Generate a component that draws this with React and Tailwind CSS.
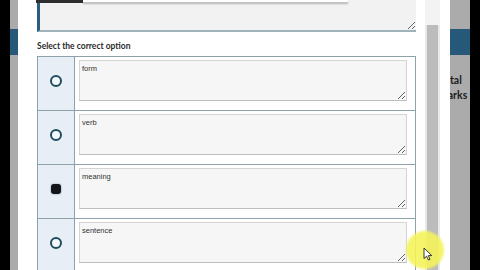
import React from 'react'

const options = [
  { text: 'form', checked: false },
  { text: 'verb', checked: false },
  { text: 'meaning', checked: true },
  { text: 'sentence', checked: false },
]

function Radio({ checked }) {
  if (checked) {
    return <div className="mt-[19px] h-[10px] w-[10px] rounded-[3px] bg-[#111418] shadow-[0_0_2px_rgba(0,0,0,0.4)]" />
  }
  return <div className="mt-[18px] h-[12px] w-[12px] rounded-full border-2 border-[#1f4d5e] bg-[#f3f8fb]" />
}

function OptionRow({ text, checked, last }) {
  return (
    <div className={`flex h-[54px] ${last ? '' : 'border-b border-[#8ea2ab]'}`}>
      <div className="flex w-[37px] shrink-0 justify-center border-r border-[#8ea2ab] bg-[#e8eef6]">
        <Radio checked={checked} />
      </div>
      <div className="flex-1 pl-[4px] pr-[8px] pt-[3px]">
        <textarea
          readOnly
          defaultValue={text}
          className="block h-[41px] w-full resize-y border border-[#d4d4d4] border-b-[#bdbdbd] bg-[#f6f6f6] px-[2px] py-[3px] font-['Liberation_Sans',sans-serif] text-[7.5px] leading-[10px] text-[#333333] outline-none"
        />
      </div>
    </div>
  )
}

export default function App() {
  return (
    <div className="relative flex h-[270px] w-[480px] overflow-hidden bg-black font-['Lato',sans-serif]">
      <div className="w-[10px] shrink-0 bg-black" />

      {/* page behind the dialog, dimmed */}
      <div className="relative w-[460px] shrink-0 bg-[#ababab]">
        <div className="mt-[29px] h-[26px] bg-[#26587a]" />
        <div className="pl-[429px] pt-[18px] text-[10.5px] font-bold leading-[15px] whitespace-nowrap text-[#1c1c1c]">
          <div>Total</div>
          <div className="-ml-[1px]">Marks</div>
        </div>

        {/* dialog */}
        <div className="absolute bottom-0 left-[8px] top-0 flex w-[432px] bg-white">
          <div className="absolute left-[18px] top-0 z-10 h-[3px] w-[47px] bg-[#2e2e2e]" />
          <div className="absolute left-[65px] top-0 z-10 h-[3px] w-[265px] border-b border-[#c4c4c4] bg-white shadow-[0_1px_2px_rgba(0,0,0,0.25)]" />

          <div className="w-[407px] shrink-0 pl-[19px] pr-[9px]">
            <textarea
              readOnly
              className="block h-[32px] w-full resize-y border-0 border-b-2 border-l-[3px] border-b-[#9fb2ba] border-l-[#2a5d7f] bg-[#f2f2f2] outline-none"
            />
            <div className="mt-[8px] text-[8.5px] font-bold leading-[12px] text-[#2b2b2b]">
              Select the correct option
            </div>
            <div className="mt-[4px] border border-[#8ea2ab]">
              {options.map((o, i) => (
                <OptionRow key={o.text} text={o.text} checked={o.checked} last={i === options.length - 1} />
              ))}
            </div>
          </div>

          {/* scrollbar */}
          <div className="flex w-[15px] shrink-0 flex-col bg-[#e9e9e9]">
            <div className="h-[25px] bg-[#f3f3f3]" />
            <div className="mx-[2px] flex-1 bg-[#bcbcbc]" />
          </div>
          <div className="flex-1 bg-white" />
        </div>
      </div>

      <div className="flex-1 bg-black" />

      {/* pointer highlight */}
      <div className="absolute left-[406px] top-[231px] h-[38px] w-[38px] rounded-full bg-[#f4f35a] opacity-90 blur-[1px]" />
      <svg className="absolute left-[423px] top-[247px]" width="10" height="14" viewBox="0 0 10 14">
        <path d="M1 1 L1 11.5 L3.6 9.2 L5.4 13 L7 12.3 L5.3 8.6 L8.8 8.6 Z" fill="#fff" stroke="#222" strokeWidth="0.9" strokeLinejoin="round" />
      </svg>
    </div>
  )
}
